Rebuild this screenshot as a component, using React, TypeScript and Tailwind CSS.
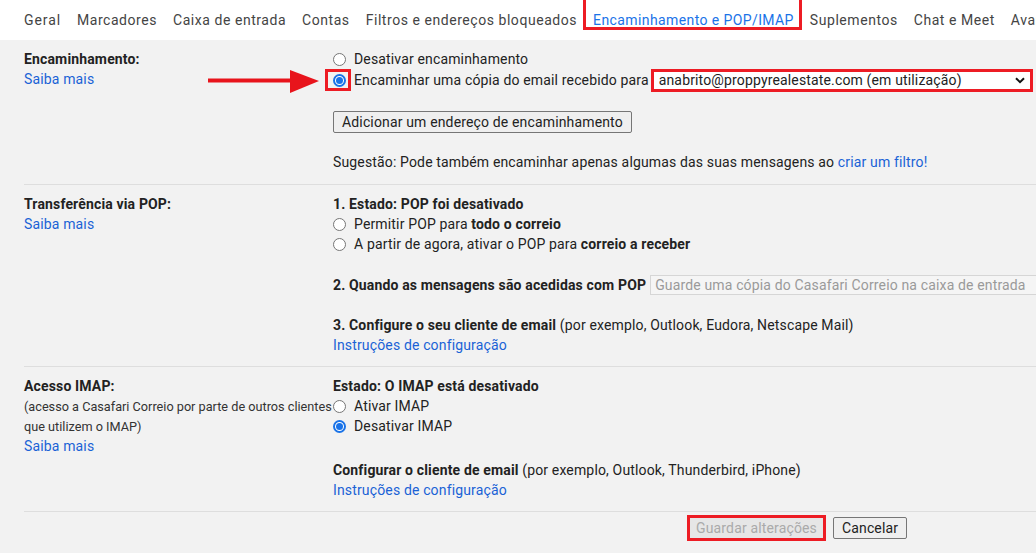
import React from 'react';

const font = { fontFamily: 'Roboto, "Liberation Sans", Arial, sans-serif' };

const tabs = [
  'Geral',
  'Marcadores',
  'Caixa de entrada',
  'Contas',
  'Filtros e endereços bloqueados',
  'Encaminhamento e POP/IMAP',
  'Suplementos',
  'Chat e Meet',
  'Avançadas',
];

const Radio: React.FC<{ checked?: boolean }> = ({ checked }) => (
  <span
    className={
      'inline-flex w-[13px] h-[13px] rounded-full items-center justify-center shrink-0 ' +
      (checked ? 'border-2 border-[#1a73e8] bg-white' : 'border border-[#767676] bg-white')
    }
  >
    {checked && <span className="w-[7px] h-[7px] rounded-full bg-[#1a73e8]" />}
  </span>
);

const Link: React.FC<{ children: React.ReactNode }> = ({ children }) => (
  <span className="text-[#1a62d6] cursor-pointer">{children}</span>
);

const Chevron = () => (
  <svg width="10" height="7" viewBox="0 0 10 7">
    <path d="M1 1.2 5 5.2 9 1.2" fill="none" stroke="#111" strokeWidth="2" />
  </svg>
);

export default function App() {
  return (
    <div className="w-[1036px] h-[553px] overflow-hidden bg-[#f2f2f2] text-[14px] text-[#222]" style={font}>
      {/* tab bar */}
      <div className="h-10 bg-white flex items-center pl-6 gap-4 whitespace-nowrap overflow-hidden">
        {tabs.map((t, i) =>
          t === 'Encaminhamento e POP/IMAP' ? (
            <span key={t} className="relative text-[#1a73e8] tracking-[0.4px] leading-5">
              {t}
              <span className="absolute -left-[10px] -right-[8px] top-[-17px] h-[37px] border-[3px] border-[#ed1c24]" />
            </span>
          ) : (
            <span key={t} className={(i === 0 ? 'tracking-[0.9px] ' : 'tracking-[0.55px] ') + 'text-[#444] leading-5'}>
              {t}
            </span>
          )
        )}
      </div>

      <div className="ml-6 tracking-[0.15px]">
        {/* Encaminhamento */}
        <div className="relative grid grid-cols-[309px_1fr] pt-[9px] pb-3 border-b border-[#dedede]">
          <div className="leading-5">
            <div className="font-bold">Encaminhamento:</div>
            <Link>Saiba mais</Link>
          </div>
          <div className="leading-5">
            <div className="flex items-center h-5 gap-2">
              <Radio />
              <span>Desativar encaminhamento</span>
            </div>
            <div className="flex items-center h-[22px]">
              <span className="relative inline-flex mr-2">
                <Radio checked />
                <span className="absolute -left-2 -top-[5px] w-[26px] h-[22px] border-[3px] border-[#ed1c24]" />
              </span>
              <span className="whitespace-nowrap">Encaminhar uma cópia do email recebido para</span>
              <div className="ml-[2px] h-[23px] flex-1 border-[3px] border-[#ed1c24] mr-[3px] bg-white flex items-center justify-between pl-[5px] pr-[5px]">
                <span className="whitespace-nowrap">anabrito@proppyrealestate.com (em utilização)</span>
                <Chevron />
              </div>
            </div>
            <button className="mt-5 h-[22px] px-2 border border-[#767676] rounded-[2px] bg-[#efefef] leading-5">
              Adicionar um endereço de encaminhamento
            </button>
            <div className="mt-[19px] whitespace-nowrap">
              Sugestão: Pode também encaminhar apenas algumas das suas mensagens ao <Link>criar um filtro!</Link>
            </div>
          </div>
          {/* red arrow annotation */}
          <svg className="absolute left-[184px] top-[29px]" width="112" height="26" viewBox="0 0 112 26">
            <path d="M0 11.5 H84" stroke="#e8141c" strokeWidth="4" />
            <path d="M82 1 L111 12 L82 24 Z" fill="#e8141c" />
          </svg>
        </div>

        {/* POP */}
        <div className="grid grid-cols-[309px_1fr] pt-[9px] pb-[11px] border-b border-[#dedede] leading-5">
          <div>
            <div className="font-bold">Transferência via POP:</div>
            <Link>Saiba mais</Link>
          </div>
          <div>
            <div className="font-bold">1. Estado: POP foi desativado</div>
            <div className="flex items-center gap-2 h-5">
              <Radio />
              <span>
                Permitir POP para <b>todo o correio</b>
              </span>
            </div>
            <div className="flex items-center gap-2 h-5">
              <Radio />
              <span>
                A partir de agora, ativar o POP para <b>correio a receber</b>
              </span>
            </div>
            <div className="flex items-center mt-[21px] h-5 whitespace-nowrap">
              <span className="font-bold mr-1">2. Quando as mensagens são acedidas com POP</span>
              <div className="h-5 flex-1 border border-[#d6d6d6] -mr-10 bg-[#f5f5f5] text-[#9a9a9a] pl-1 flex items-center">
                Guarde uma cópia do Casafari Correio na caixa de entrada
              </div>
            </div>
            <div className="mt-5">
              <b>3. Configure o seu cliente de email</b> (por exemplo, Outlook, Eudora, Netscape Mail)
            </div>
            <Link>Instruções de configuração</Link>
          </div>
        </div>

        {/* IMAP */}
        <div className="grid grid-cols-[309px_1fr] pt-[9px] pb-[11px] border-b border-[#dedede] leading-5">
          <div>
            <div className="font-bold">Acesso IMAP:</div>
            <div className="text-[12.7px] tracking-normal leading-[19.5px] text-[#333] mt-[1px] whitespace-nowrap">
              (acesso a Casafari Correio por parte de outros clientes
              <br />
              que utilizem o IMAP)
            </div>
            <Link>Saiba mais</Link>
          </div>
          <div>
            <div className="font-bold">Estado: O IMAP está desativado</div>
            <div className="flex items-center gap-2 h-5">
              <Radio />
              <span>Ativar IMAP</span>
            </div>
            <div className="flex items-center gap-2 h-5">
              <Radio checked />
              <span>Desativar IMAP</span>
            </div>
            <div className="mt-6">
              <b>Configurar o cliente de email</b> (por exemplo, Outlook, Thunderbird, iPhone)
            </div>
            <Link>Instruções de configuração</Link>
          </div>
        </div>

        {/* buttons */}
        <div className="flex items-center pt-[3px] pl-[663px] gap-[7px]">
          <div className="border-[3px] border-[#ed1c24]">
            <button className="h-5 px-[6px] bg-[#e6e6e6] text-[#aaa] leading-5 block">Guardar alterações</button>
          </div>
          <button className="h-[22px] px-[8px] border border-[#767676] rounded-[2px] bg-[#efefef] leading-5">
            Cancelar
          </button>
        </div>
      </div>
    </div>
  );
}
